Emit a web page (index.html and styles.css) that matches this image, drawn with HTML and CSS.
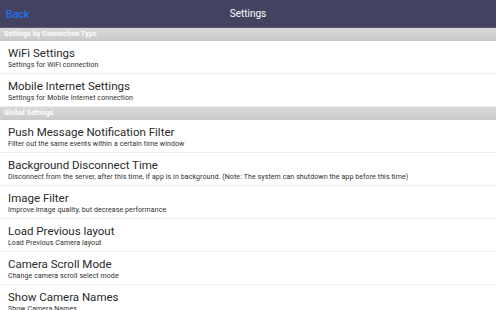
FILE: index.html
```html
<!DOCTYPE html>
<html lang="en">
<head>
    <meta charset="UTF-8">
    <meta name="viewport" content="width=device-width, initial-scale=1.0">
    <title>Settings</title>
    <link rel="stylesheet" href="styles.css">
</head>
<body>
    <div class="topbar">
        <button class="back">Back</button>
        <h1>Settings</h1>
    </div>

    <div class="section">Settings by Connection Type</div>
    <div class="item">
        <div class="title">WiFi Settings</div>
        <div class="desc">Settings for WiFi connection</div>
    </div>
    <div class="item">
        <div class="title">Mobile Internet Settings</div>
        <div class="desc">Settings for Mobile Internet connection</div>
    </div>

    <div class="section">Global Settings</div>
    <div class="item">
        <div class="title">Push Message Notification Filter</div>
        <div class="desc">Filter out the same events within a certain time window</div>
    </div>
    <div class="item">
        <div class="title">Background Disconnect Time</div>
        <div class="desc">Disconnect from the server, after this time, if app is in background. (Note: The system can shutdown the app before this time)</div>
    </div>
    <div class="item">
        <div class="title">Image Filter</div>
        <div class="desc">Improve image quality, but decrease performance</div>
    </div>
    <div class="item">
        <div class="title">Load Previous layout</div>
        <div class="desc">Load Previous Camera layout</div>
    </div>
    <div class="item">
        <div class="title">Camera Scroll Mode</div>
        <div class="desc">Change camera scroll select mode</div>
    </div>
    <div class="item">
        <div class="title">Show Camera Names</div>
        <div class="desc">Show Camera Names</div>
    </div>
</body>
</html>
```

FILE: styles.css
```css
* {
    box-sizing: border-box;
    margin: 0;
    padding: 0;
}

body {
    width: 496px;
    height: 310px;
    overflow: hidden;
    font-family: Roboto, "Liberation Sans", sans-serif;
    background: #fff;
    color: #1c1c1c;
}

.topbar {
    position: relative;
    height: 28px;
    background: #434260;
    border-bottom: 1px solid #5a596f;
    display: flex;
    align-items: center;
    justify-content: center;
}

.topbar h1 {
    font-size: 10px;
    font-weight: 400;
    color: #fff;
}

.back {
    position: absolute;
    left: 6px;
    top: 8px;
    background: transparent;
    border: none;
    font: inherit;
    font-size: 10.5px;
    font-weight: 500;
    color: #1f72ee;
    cursor: pointer;
}

.section {
    height: 13px;
    padding: 0 4px;
    background: linear-gradient(#dadada, #c9c9c9);
    color: #fff;
    font-size: 7px;
    font-weight: bold;
    letter-spacing: 0.1px;
    line-height: 13px;
}

.item {
    height: 33px;
    padding: 5px 8px 0;
    border-bottom: 1px solid #eeeeee;
}

.item:last-child {
    border-bottom: none;
}

.title {
    font-size: 11.5px;
    line-height: 15px;
    color: #2a2a2a;
}

.desc {
    font-size: 7px;
    line-height: 9px;
    letter-spacing: 0.1px;
    color: #2e2e2e;
    white-space: nowrap;
}
```
